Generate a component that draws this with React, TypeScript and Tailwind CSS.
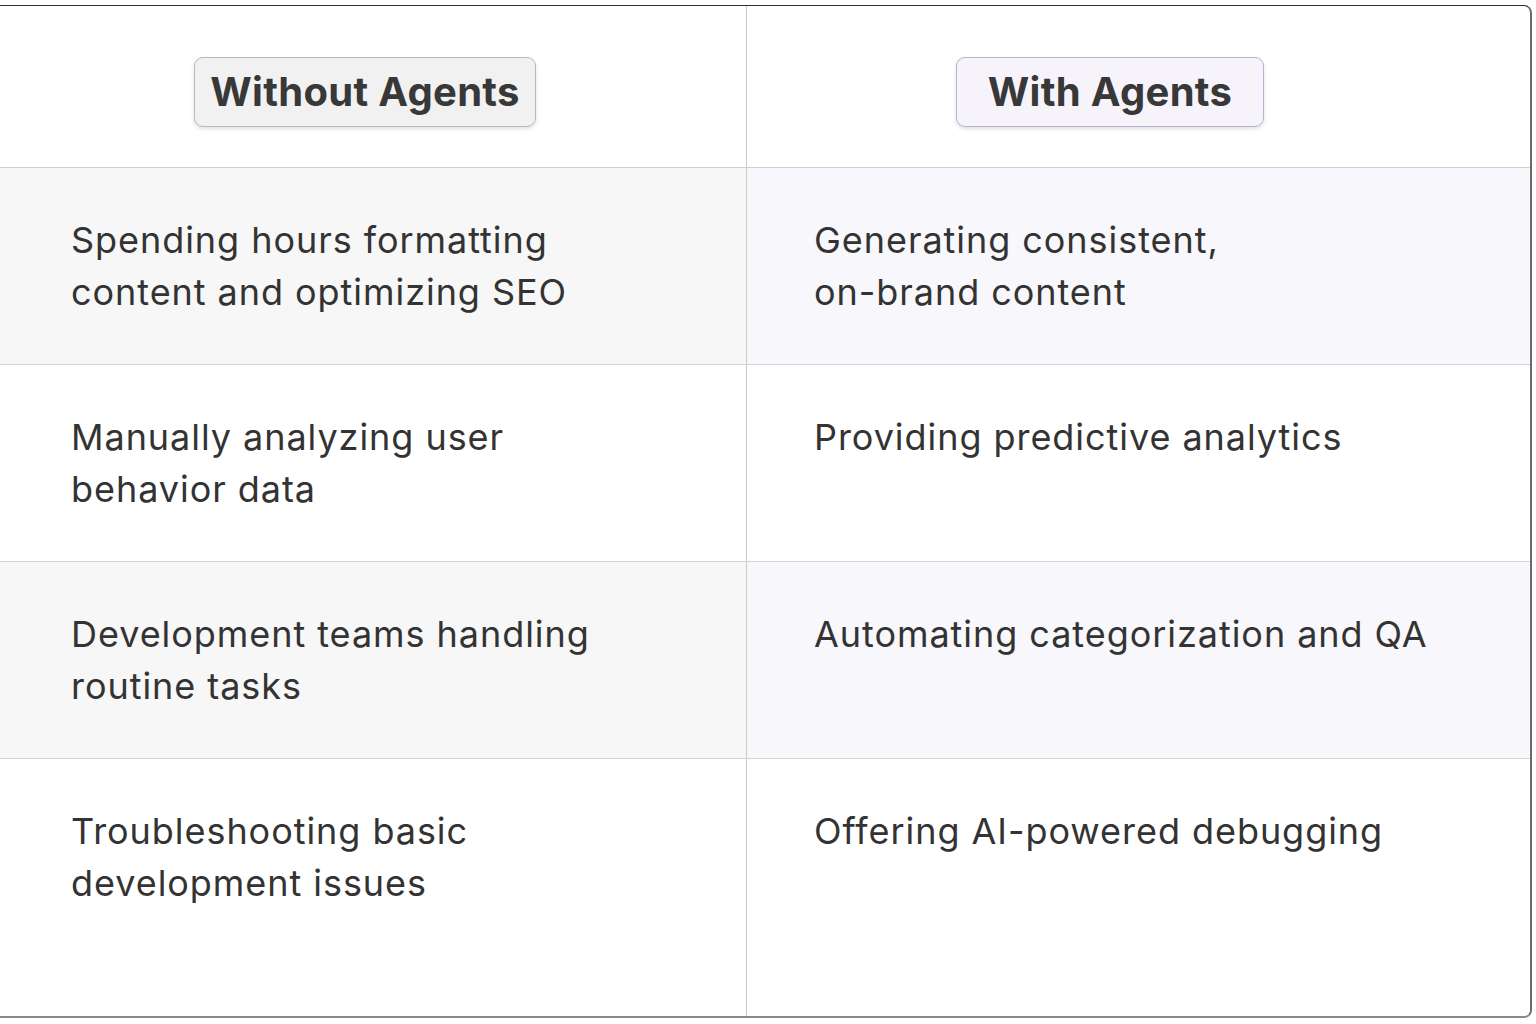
import React from "react";

// Comparison table: work without agents vs. with agents
// Two columns, badge headers, alternating row tints

type Row = {
  without: string[];
  withAgents: string[];
};

const rows: Row[] = [
  {
    without: ["Spending hours formatting", "content and optimizing SEO"],
    withAgents: ["Generating consistent,", "on-brand content"],
  },
  {
    without: ["Manually analyzing user", "behavior data"],
    withAgents: ["Providing predictive analytics"],
  },
  {
    without: ["Development teams handling", "routine tasks"],
    withAgents: ["Automating categorization and QA"],
  },
  {
    without: ["Troubleshooting basic", "development issues"],
    withAgents: ["Offering AI-powered debugging"],
  },
];

function Lines({ lines }: { lines: string[] }) {
  return (
    <p className="text-[36px] leading-[52px] tracking-[0.95px] text-[#333333]">
      {lines.map((l, i) => (
        <span key={i} className="block whitespace-nowrap">
          {l}
        </span>
      ))}
    </p>
  );
}

export default function App() {
  return (
    <div className="min-h-screen w-full bg-white pt-[5px] font-['Inter','Liberation_Sans',sans-serif]">
      <div className="w-[1532px] overflow-hidden rounded-tr-[8px] rounded-br-[8px] border-t-[1.5px] border-r-2 border-b-2 border-t-[#2e2e2e] border-r-[#6b6b6b] border-b-[#8a8a8a] bg-white">
        {/* Header */}
        <div className="grid h-[162px] grid-cols-[747px_1fr] border-b border-[#d0d0d0]">
          <div className="flex items-center border-r-[1.5px] border-[#c9c9c9] pt-[10px] pl-[194px]">
            <span className="inline-flex h-[70px] w-[342px] items-center justify-center rounded-[9px] border border-[#b9b9b9] bg-[#f1f1f1] text-[40px] font-bold tracking-[0.3px] text-[#383838] shadow-[0_2px_4px_rgba(0,0,0,0.12)]">
              Without Agents
            </span>
          </div>
          <div className="flex items-center pt-[10px] pl-[209px]">
            <span className="inline-flex h-[70px] w-[308px] items-center justify-center rounded-[9px] border border-[#b7b1d4] bg-[#f6f3fb] text-[40px] font-bold tracking-[0.3px] text-[#383838] shadow-[0_2px_4px_rgba(0,0,0,0.12)]">
              With Agents
            </span>
          </div>
        </div>

        {/* Rows */}
        {rows.map((r, i) => {
          const tinted = i % 2 === 0;
          const last = i === rows.length - 1;
          return (
            <div
              key={i}
              className={[
                "grid grid-cols-[747px_1fr]",
                last ? "h-[257px]" : "h-[197px] border-b border-[#d4d4d4]",
              ].join(" ")}
            >
              <div
                className={[
                  "border-r-[1.5px] border-[#c9c9c9] pt-[46px] pl-[71px]",
                  tinted ? "bg-[#f7f7f8]" : "bg-white",
                ].join(" ")}
              >
                <Lines lines={r.without} />
              </div>
              <div
                className={[
                  "pt-[46px] pl-[67px]",
                  tinted ? "bg-[#f8f7fb]" : "bg-white",
                ].join(" ")}
              >
                <Lines lines={r.withAgents} />
              </div>
            </div>
          );
        })}
      </div>
    </div>
  );
}
